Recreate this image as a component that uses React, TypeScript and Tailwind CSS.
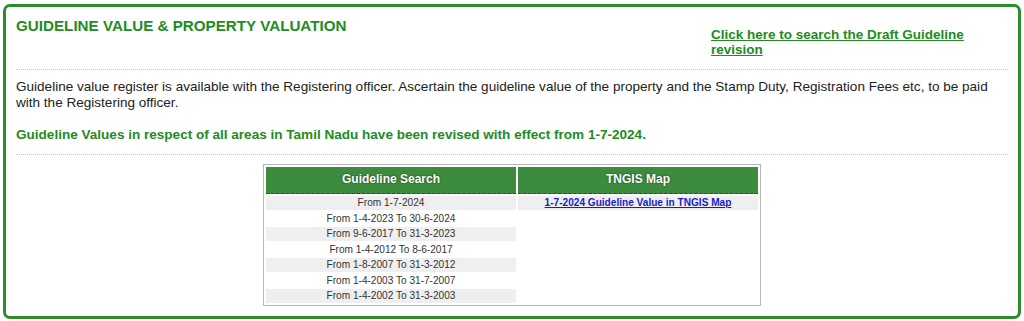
const rows = [
  "From 1-7-2024",
  "From 1-4-2023 To 30-6-2024",
  "From 9-6-2017 To 31-3-2023",
  "From 1-4-2012 To 8-6-2017",
  "From 1-8-2007 To 31-3-2012",
  "From 1-4-2003 To 31-7-2007",
  "From 1-4-2002 To 31-3-2003",
];

export default function App() {
  return (
    <div className="w-[1024px] h-[321px] bg-white pt-[4px] pl-[3px] pr-[3px] font-['Liberation_Sans',Arial,sans-serif]">
      <div className="h-[315px] border-[3px] border-[#2e8b2e] rounded-[7px] px-[10px]">
        <div className="flex justify-between">
          <h1 className="pt-[10px] text-[15.2px] leading-[18px] font-bold text-[#228b22]">
            GUIDELINE VALUE &amp; PROPERTY VALUATION
          </h1>
          <a
            href="#"
            className="mt-[20px] w-[297px] pr-[30px] text-[13.5px] leading-[15px] font-bold text-[#228b22] underline"
          >
            Click here to search the Draft Guideline revision
          </a>
        </div>
        <div className="mt-[12px] border-t border-dotted border-[#c8c8c8]" />
        <p className="mt-[9px] pr-[14px] text-[13.55px] leading-[16px] text-[#222]">
          Guideline value register is available with the Registering officer.
          Ascertain the guideline value of the property and the Stamp Duty,
          Registration Fees etc, to be paid with the Registering officer.
        </p>
        <p className="mt-[16px] text-[13.55px] leading-[16px] font-bold text-[#228b22]">
          Guideline Values in respect of all areas in Tamil Nadu have been
          revised with effect from 1-7-2024.
        </p>
        <div className="mt-[11px] border-t border-dotted border-[#c8c8c8]" />
        <div className="flex justify-center pt-[9px]">
          <table className="border border-[#b5b5b5] border-separate border-spacing-[2px] text-[10.1px] leading-[13.5px] text-[#333]">
            <thead>
              <tr>
                <th className="w-[250px] h-[27px] p-0 bg-[#3d8b3d] text-white text-[12px] font-bold border-b border-dashed border-[#1f5a1f] [text-shadow:0_0_2px_rgba(0,0,0,0.6)]">
                  Guideline Search
                </th>
                <th className="w-[240px] h-[27px] p-0 bg-[#3d8b3d] text-white text-[12px] font-bold border-b border-dashed border-[#1f5a1f] [text-shadow:0_0_2px_rgba(0,0,0,0.6)]">
                  TNGIS Map
                </th>
              </tr>
            </thead>
            <tbody>
              {rows.map((r, i) => (
                <tr key={r}>
                  <td
                    className={`text-center p-0 ${
                      i % 2 === 0 ? "bg-[#efefef]" : "bg-white"
                    }`}
                  >
                    {r}
                  </td>
                  {i === 0 ? (
                    <td className="text-center p-0 bg-[#efefef]">
                      <a
                        href="#"
                        className="font-bold text-[#1a1acc] underline"
                      >
                        1-7-2024 Guideline Value in TNGIS Map
                      </a>
                    </td>
                  ) : (
                    <td className="p-0" />
                  )}
                </tr>
              ))}
            </tbody>
          </table>
        </div>
      </div>
    </div>
  );
}
